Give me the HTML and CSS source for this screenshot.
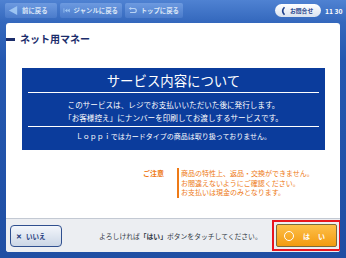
FILE: index.html
```html
<!DOCTYPE html>
<html>
<head>
  <title>ネット用マネー</title>
  <link rel="stylesheet" href="styles.css">
</head>
<body>
  <div class="screen">
    <header class="topbar">
      <nav class="nav">
        <button class="nav-button">
          <svg class="nav-icon" viewBox="0 0 12 12" width="11" height="11"><path d="M1 6 L10 1 L10 11 Z" fill="#9cc4f2"/></svg>
          前に戻る
        </button>
        <button class="nav-button">
          <svg class="nav-icon" viewBox="0 0 14 12" width="13" height="11"><rect x="1" y="2" width="1.5" height="8" fill="#9cc4f2"/><path d="M3.5 6 L8 2.5 L8 9.5 Z M8 6 L12.5 2.5 L12.5 9.5 Z" fill="#9cc4f2"/></svg>
          ジャンルに戻る
        </button>
        <button class="nav-button">
          <svg class="nav-icon" viewBox="0 0 14 12" width="13" height="11"><path d="M4 3 H9 A3 3 0 0 1 9 9 H3" fill="none" stroke="#b8d3f4" stroke-width="1.6"/><path d="M1 3 L4.5 0.8 L4.5 5.2 Z" fill="#b8d3f4"/></svg>
          トップに戻る
        </button>
      </nav>
      <div class="status">
        <div class="contact">
          <svg viewBox="0 0 8 12" width="6" height="10"><path d="M6 1 Q1 6 6 11" fill="none" stroke="#1d3f8a" stroke-width="2.2"/></svg>
          <span>お問合せ</span>
        </div>
        <div class="clock">11 30</div>
      </div>
    </header>

    <main class="panel">
      <div class="content">
        <h1 class="page-title">ネット用マネー</h1>

        <section class="info-box">
          <h2 class="info-title">サービス内容について</h2>
          <div class="info-rows">
            <p>このサービスは、レジでお支払いいただいた後に発行します。</p>
            <p>「お客様控え」にナンバーを印刷してお渡しするサービスです。</p>
          </div>
          <p class="info-note">Ｌｏｐｐｉではカードタイプの商品は取り扱っておりません。</p>
        </section>

        <div class="caution">
          <div class="caution-label">ご注意</div>
          <div class="caution-text">
            <p>商品の特性上、返品・交換ができません。</p>
            <p>お間違えないようにご確認ください。</p>
            <p>お支払いは現金のみとなります。</p>
          </div>
        </div>
      </div>

      <footer class="footer">
        <button class="no-button"><span class="cross">✕</span>いいえ</button>
        <p class="prompt">よろしければ<b>「はい」</b>ボタンをタッチしてください。</p>
        <div class="yes-frame">
          <button class="yes-button"><span class="ring"></span><span class="yes-label">はい</span></button>
        </div>
      </footer>
    </main>
  </div>
</body>
</html>
```

FILE: styles.css
```css
:root {
  --frame-blue: #2457b0;
  --box-blue: #0b3c9c;
  --title-navy: #1b2d6b;
  --orange: #ee7a16;
  --footer-gray: #eceef2;
  --line-gray: #c3c9d3;
}

* {
  box-sizing: border-box;
}

body {
  margin: 0;
  font-family: "Noto Sans CJK JP", "Noto Sans", sans-serif;
  background: var(--frame-blue);
}

p {
  margin: 0;
}

button {
  font-family: inherit;
  padding: 0;
  cursor: pointer;
}

.screen {
  width: 346px;
  height: 258px;
  display: flex;
  flex-direction: column;
  background: linear-gradient(180deg, #4f82d2 0px, #3468bd 22px, #2458b0 60px, #1f4ea3 258px);
  overflow: hidden;
}

/* top bar */

.topbar {
  height: 23px;
  display: flex;
  align-items: flex-start;
  padding: 3px 0 0 5px;
}

.nav {
  display: flex;
  gap: 3px;
}

.nav-button {
  height: 15px;
  display: flex;
  align-items: center;
  gap: 3px;
  padding: 0 4px 0 3px;
  border: none;
  border-radius: 2px;
  background: linear-gradient(180deg, #6d9ae0, #4a7bcb);
  color: #dce7f7;
  font-size: 6.4px;
  font-weight: 700;
  white-space: nowrap;
}

.nav-button:nth-child(1) { width: 52px; }
.nav-button:nth-child(2) { width: 62px; }
.nav-button:nth-child(3) { width: 58px; }

.status {
  margin-left: auto;
  display: flex;
  align-items: center;
  gap: 4px;
  padding-top: 1px;
}

.contact {
  width: 46px;
  height: 13px;
  display: flex;
  align-items: center;
  gap: 4px;
  padding-left: 5px;
  border-radius: 7px;
  background: linear-gradient(180deg, #ffffff, #d9e2ef);
  color: #1d3f8a;
  font-size: 5.8px;
  font-weight: 700;
}

.clock {
  width: 21px;
  color: #ffffff;
  font-size: 6.8px;
  font-weight: 700;
  white-space: pre;
}

/* main panel */

.panel {
  margin: 0 6px;
  height: 229px;
  display: flex;
  flex-direction: column;
  border-radius: 3px;
  overflow: hidden;
  background: #ffffff;
}

.content {
  height: 195px;
  padding-top: 10px;
}

.page-title {
  margin: 0;
  display: flex;
  align-items: center;
  gap: 5px;
  height: 12px;
  color: var(--title-navy);
  font-size: 10px;
  font-weight: 700;
  line-height: 12px;
}

.page-title::before {
  content: "";
  width: 9px;
  height: 3px;
  background: var(--title-navy);
}

.info-box {
  margin: 23px 0 0 16px;
  width: 303px;
  height: 82px;
  background: var(--box-blue);
  color: #ffffff;
  text-align: center;
}

.info-title {
  margin: 0 6px;
  height: 25px;
  line-height: 25px;
  font-size: 13.4px;
  font-weight: 400;
  border-bottom: 1px solid #ffffff;
}

.info-rows {
  margin: 0 6px;
  padding: 5px 0 2px;
  border-bottom: 1px solid #ffffff;
}

.info-rows p {
  font-size: 7.6px;
  line-height: 13px;
  white-space: nowrap;
}

.info-note {
  padding-top: 2px;
  font-size: 7px;
  line-height: 15px;
}

.caution {
  margin: 18px 0 0 137px;
  display: flex;
  gap: 13px;
  color: var(--orange);
}

.caution-label {
  font-size: 7px;
  font-weight: 700;
  line-height: 9.5px;
  padding-top: 1px;
}

.caution-text {
  border-left: 2px solid var(--orange);
  padding: 1px 0 0 2px;
  font-size: 7px;
  line-height: 9.5px;
  white-space: nowrap;
}

/* footer */

.footer {
  flex: 1;
  display: flex;
  align-items: center;
  padding: 0 0 0 4px;
  border-top: 1px solid var(--line-gray);
  background: var(--footer-gray);
}

.no-button {
  width: 52px;
  height: 22px;
  display: flex;
  align-items: center;
  gap: 4px;
  padding-left: 5px;
  border: 1px solid #2f4f8f;
  border-radius: 4px;
  background: linear-gradient(180deg, #f3f6fb, #cbd6e6);
  color: #1d3a7c;
  font-size: 6.5px;
  font-weight: 700;
}

.cross {
  font-size: 7px;
}

.prompt {
  margin-left: 37px;
  color: #333a46;
  font-size: 6.8px;
  white-space: nowrap;
}

.yes-frame {
  margin-left: auto;
  width: 69px;
  height: 31px;
  padding: 2px;
  border: 2px solid #e8141e;
  margin-right: -1px;
}

.yes-button {
  width: 100%;
  height: 100%;
  display: flex;
  align-items: center;
  gap: 9px;
  padding-left: 7px;
  border: 1px solid #7a6a3a;
  border-radius: 2px;
  background: linear-gradient(180deg, #fdc04a, #f39a10);
  color: #ffffff;
  font-size: 7px;
  font-weight: 700;
}

.yes-label {
  letter-spacing: 8px;
}

.ring {
  width: 10px;
  height: 10px;
  border: 1.8px solid #ffffff;
  border-radius: 50%;
}
```
